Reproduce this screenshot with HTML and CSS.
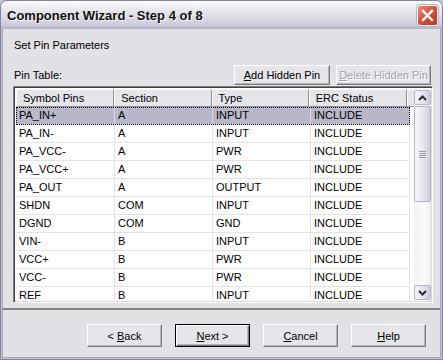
FILE: index.html
```html
<!DOCTYPE html>
<html lang="en">
<head>
  <meta charset="UTF-8">
  <title>Component Wizard - Step 4 of 8</title>
  <link rel="stylesheet" href="styles.css">
</head>
<body>
  <div class="window">
    <div class="titlebar">
      <span class="title">Component Wizard - Step 4 of 8</span>
      <div class="close">
        <svg width="13" height="13" viewBox="0 0 13 13">
          <path d="M2 2 L11 11 M11 2 L2 11" stroke="#fff" stroke-width="2.4" stroke-linecap="square"/>
        </svg>
      </div>
    </div>

    <div class="client">
      <div class="heading">Set Pin Parameters</div>

      <div class="toolbar">
        <span class="label">Pin Table:</span>
        <button class="btn btn-add"><u>A</u>dd Hidden Pin</button>
        <button class="btn btn-del" disabled><u>D</u>elete Hidden Pin</button>
      </div>

      <div class="list">
        <div class="cols">
          <div class="header">
            <div class="hcell">Symbol Pins</div>
            <div class="hcell">Section</div>
            <div class="hcell">Type</div>
            <div class="hcell">ERC Status</div>
            <div class="hcell hfill"></div>
          </div>
          <div class="rows">
            <div class="row selected"><div class="cell">PA_IN+</div><div class="cell">A</div><div class="cell">INPUT</div><div class="cell">INCLUDE</div></div>
            <div class="row"><div class="cell">PA_IN-</div><div class="cell">A</div><div class="cell">INPUT</div><div class="cell">INCLUDE</div></div>
            <div class="row"><div class="cell">PA_VCC-</div><div class="cell">A</div><div class="cell">PWR</div><div class="cell">INCLUDE</div></div>
            <div class="row"><div class="cell">PA_VCC+</div><div class="cell">A</div><div class="cell">PWR</div><div class="cell">INCLUDE</div></div>
            <div class="row"><div class="cell">PA_OUT</div><div class="cell">A</div><div class="cell">OUTPUT</div><div class="cell">INCLUDE</div></div>
            <div class="row"><div class="cell">SHDN</div><div class="cell">COM</div><div class="cell">INPUT</div><div class="cell">INCLUDE</div></div>
            <div class="row"><div class="cell">DGND</div><div class="cell">COM</div><div class="cell">GND</div><div class="cell">INCLUDE</div></div>
            <div class="row"><div class="cell">VIN-</div><div class="cell">B</div><div class="cell">INPUT</div><div class="cell">INCLUDE</div></div>
            <div class="row"><div class="cell">VCC+</div><div class="cell">B</div><div class="cell">PWR</div><div class="cell">INCLUDE</div></div>
            <div class="row"><div class="cell">VCC-</div><div class="cell">B</div><div class="cell">PWR</div><div class="cell">INCLUDE</div></div>
            <div class="row"><div class="cell">REF</div><div class="cell">B</div><div class="cell">INPUT</div><div class="cell">INCLUDE</div></div>
          </div>
        </div>

        <!-- vertical scrollbar -->
        <div class="scrollbar">
          <div class="sb-btn">
            <svg width="9" height="6" viewBox="0 0 9 6"><path d="M1 5 L4.5 1.5 L8 5" fill="none" stroke="#2b2b3a" stroke-width="2"/></svg>
          </div>
          <div class="sb-thumb">
            <span class="grip"></span>
          </div>
          <div class="sb-track"></div>
          <div class="sb-btn">
            <svg width="9" height="6" viewBox="0 0 9 6"><path d="M1 1 L4.5 4.5 L8 1" fill="none" stroke="#2b2b3a" stroke-width="2"/></svg>
          </div>
        </div>
      </div>

      <div class="separator"></div>

      <div class="footer">
        <button class="btn">&lt; <u>B</u>ack</button>
        <button class="btn btn-default"><u>N</u>ext &gt;</button>
        <button class="btn"><u>C</u>ancel</button>
        <button class="btn"><u>H</u>elp</button>
      </div>
    </div>
  </div>
</body>
</html>
```

FILE: styles.css
```css
body {
  margin: 0;
  padding: 0;
  font-family: "Liberation Sans", Arial, sans-serif;
  font-size: 11px;
  color: #000;
  background-color: #c4c4d6;
}

.window {
  width: 443px;
  height: 360px;
  box-sizing: border-box;
  border: 1px solid #83839f;
  border-radius: 7px 7px 0 0;
  background-color: #c4c4d6;
  display: flex;
  flex-direction: column;
  overflow: hidden;
}

.titlebar {
  height: 28px;
  flex: none;
  display: flex;
  align-items: center;
  padding: 0 4px 0 6px;
  background: linear-gradient(#fdfdfe 0%, #ebebf1 25%, #dcdce6 55%, #cdcddb 85%, #b3b3c8 100%);
}

.title {
  flex: 1;
  font-size: 13px;
  font-weight: bold;
  color: #111;
  text-shadow: 1px 1px 0 #f4f4f8;
  padding-top: 1px;
}

.close {
  width: 19px;
  height: 19px;
  border: 1px solid #f2f2f2;
  border-radius: 3px;
  background: linear-gradient(135deg, #ee8a78 0%, #d8553d 45%, #b9321f 100%);
  box-shadow: 0 0 0 1px #b8b8c8;
  display: flex;
  align-items: center;
  justify-content: center;
}

.client {
  flex: 1;
  margin: 0 1px 1px;
  border: 1px solid #a6a6b8;
  border-top: none;
  background-color: #e2e1e6;
  display: flex;
  flex-direction: column;
}

.heading {
  padding: 9px 11px 0;
  line-height: 14px;
}

.toolbar {
  margin-top: 13px;
  height: 20px;
  display: flex;
  align-items: center;
  gap: 6px;
  padding: 0 9px 0 11px;
}

.toolbar .label {
  flex: 1;
}

.btn {
  font-family: "Liberation Sans", Arial, sans-serif;
  font-size: 11px;
  color: #000;
  background-color: #e6e5ea;
  border: 1px solid;
  border-color: #fff #7c7c80 #7c7c80 #fff;
  box-shadow: inset -1px -1px 0 #b4b3b8;
  padding: 0;
  margin: 0;
}

.btn-add {
  width: 96px;
  height: 20px;
}

.btn-del {
  width: 95px;
  height: 20px;
  color: #a3a2a8;
  text-shadow: 1px 1px 0 #fff;
}

.list {
  margin: 1px 7px 0 10px;
  height: 217px;
  box-sizing: border-box;
  border: 1px solid;
  border-color: #808080 #fff #fff #808080;
  box-shadow: inset 1px 1px 0 #404040, inset -1px -1px 0 #dcdbe0;
  padding: 2px 1px 1px 2px;
  background-color: #fff;
  display: flex;
}

.cols {
  flex: 1;
  overflow: hidden;
  display: flex;
  flex-direction: column;
}

.header {
  display: flex;
  height: 18px;
  flex: none;
  background-color: #e6e5ea;
}

.hcell {
  width: 99px;
  box-sizing: border-box;
  padding-left: 6px;
  line-height: 17px;
  border-top: 1px solid #fff;
  border-left: 1px solid #fff;
  border-right: 1px solid #8d8c91;
  border-bottom: 1px solid #8d8c91;
}

.hcell:nth-child(2),
.hcell:nth-child(3) {
  width: 98px;
}

.hfill {
  flex: 1;
  border-right: none;
}

.rows {
  flex: 1;
  overflow: hidden;
}

.row {
  display: flex;
  width: 394px;
  height: 18px;
  box-sizing: border-box;
  border-bottom: 1px solid #e3e2e8;
}

.cell {
  width: 99px;
  box-sizing: border-box;
  padding-left: 3px;
  line-height: 17px;
  border-right: 1px solid #e3e2e8;
}

.cell:nth-child(2),
.cell:nth-child(3) {
  width: 98px;
}

.row.selected {
  background-color: #b9b8c9;
  outline: 1px dotted #000;
  outline-offset: -1px;
}

.row.selected .cell {
  border-right-color: #d8d7e2;
}

.scrollbar {
  width: 17px;
  flex: none;
  display: flex;
  flex-direction: column;
  background: linear-gradient(90deg, #f4f4f6, #fbfbfc 60%, #eeeef3);
}

.sb-btn {
  height: 15px;
  margin: 1px 0;
  flex: none;
  box-sizing: border-box;
  border: 1px solid #b7b7c9;
  border-radius: 2px;
  background: linear-gradient(90deg, #f3f3f7, #e2e2ea 60%, #cacad8);
  display: flex;
  align-items: center;
  justify-content: center;
}

.sb-thumb {
  height: 96px;
  flex: none;
  box-sizing: border-box;
  border: 1px solid #b3b3c6;
  border-radius: 2px;
  background: linear-gradient(90deg, #f7f7fa, #e6e6ee 55%, #cfcfdc);
  display: flex;
  align-items: center;
  justify-content: center;
}

.grip {
  width: 7px;
  height: 7px;
  background: repeating-linear-gradient(#9c9cb0 0 1px, transparent 1px 2px);
}

.sb-track {
  flex: 1;
}

.separator {
  margin-top: 5px;
  height: 2px;
  background-color: #84827c;
}

.footer {
  margin-top: 14px;
  display: flex;
  justify-content: flex-end;
  gap: 13px;
  padding-right: 14px;
}

.footer .btn {
  width: 75px;
  height: 23px;
}

.footer .btn-default {
  border: 1px solid #000;
  box-shadow: inset 1px 1px 0 #fff, inset -1px -1px 0 #7c7c80, inset -2px -2px 0 #b4b3b8;
}
```
